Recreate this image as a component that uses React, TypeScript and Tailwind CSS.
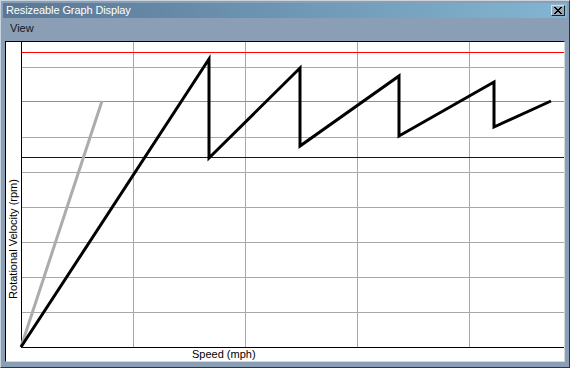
import React from 'react';

const hGrid = [67, 137, 172, 207, 242, 277, 312];
const vGrid = [133, 245, 357, 469];

const speedTrace = '21,347 209,59 209,158 300,68 300,146 399,76 399,136 494,82 494,127 551,101';
const idealTrace = '21,347 102,101';

function CloseButton() {
  return (
    <div className="mr-[2px] mt-[2px] flex h-[11px] w-[14px] items-center justify-center border border-t-[#d8e0e8] border-l-[#d8e0e8] border-r-[#1c2430] border-b-[#1c2430] bg-[#98a8b8]">
      <svg width="8" height="7" viewBox="0 0 8 7" shapeRendering="crispEdges">
        <path d="M0 0h2v1h1v1h2V1h1V0h2v1H7v1H6v1H5v1h1v1h1v1h1v1H6V6H5V5H3v1H2v1H0V6h1V5h1V4h1V3H2V2H1V1H0z" fill="#000" />
      </svg>
    </div>
  );
}

function Graph() {
  return (
    <svg width="558" height="319" viewBox="6 42 558 319" className="block">
      <rect x="6" y="42" width="558" height="319" fill="#fff" />
      <g shapeRendering="crispEdges" strokeWidth="1">
        {vGrid.map((x) => (
          <line key={x} x1={x + 0.5} y1="42" x2={x + 0.5} y2="347" stroke="#a8a8a8" />
        ))}
        {hGrid.map((y) => (
          <line key={y} x1="21" y1={y + 0.5} x2="564" y2={y + 0.5} stroke="#a8a8a8" />
        ))}
        <line x1="21" y1="52.5" x2="564" y2="52.5" stroke="#ff0000" />
        <line x1="21" y1="101.5" x2="564" y2="101.5" stroke="#22dd22" />
        <line x1="21" y1="157.5" x2="564" y2="157.5" stroke="#0000c8" />
        <line x1="21.5" y1="42" x2="21.5" y2="348" stroke="#000" />
        <line x1="21" y1="347.5" x2="564" y2="347.5" stroke="#000" />
      </g>
      <polyline points={idealTrace} fill="none" stroke="#acacac" strokeWidth="3" />
      <polyline points={speedTrace} fill="none" stroke="#000" strokeWidth="3" strokeLinejoin="miter" />
      <text
        x="192"
        y="358"
        fontFamily="'Liberation Sans', Arial, sans-serif"
        fontSize="11"
        fill="#000"
      >
        Speed (mph)
      </text>
      <text
        x="0"
        y="0"
        transform="translate(17 239) rotate(-90)"
        textAnchor="middle"
        fontFamily="'Liberation Sans', Arial, sans-serif"
        fontSize="11"
        fill="#000"
      >
        Rotational Velocity (rpm)
      </text>
    </svg>
  );
}

export default function App() {
  return (
    <div
      className="flex h-[368px] w-[570px] flex-col border border-t-[#c8d4e0] border-l-[#c8d4e0] border-r-[#2a3648] border-b-[#2a3648] bg-[#8a9eb5] text-[11px]"
      style={{ fontFamily: "'Liberation Sans', Arial, sans-serif" }}
    >
      {/* Title bar */}
      <div className="mx-[2px] mt-[2px] flex h-[15px] items-start justify-between bg-gradient-to-r from-[#5a7894] to-[#82b6d2]">
        <span className="pl-[3px] leading-[15px] tracking-[-0.1px] text-white">Resizeable Graph Display</span>
        <CloseButton />
      </div>

      {/* Menu */}
      <div className="flex h-[20px] items-center px-[9px] text-[#101820]">
        <span>View</span>
      </div>

      {/* Client area */}
      <div className="mx-[4px] mb-[5px] mt-[3px] flex-1 overflow-hidden border border-t-black border-l-black border-r-[#d0d8e0] border-b-[#d0d8e0] bg-white">
        <Graph />
      </div>
    </div>
  );
}
